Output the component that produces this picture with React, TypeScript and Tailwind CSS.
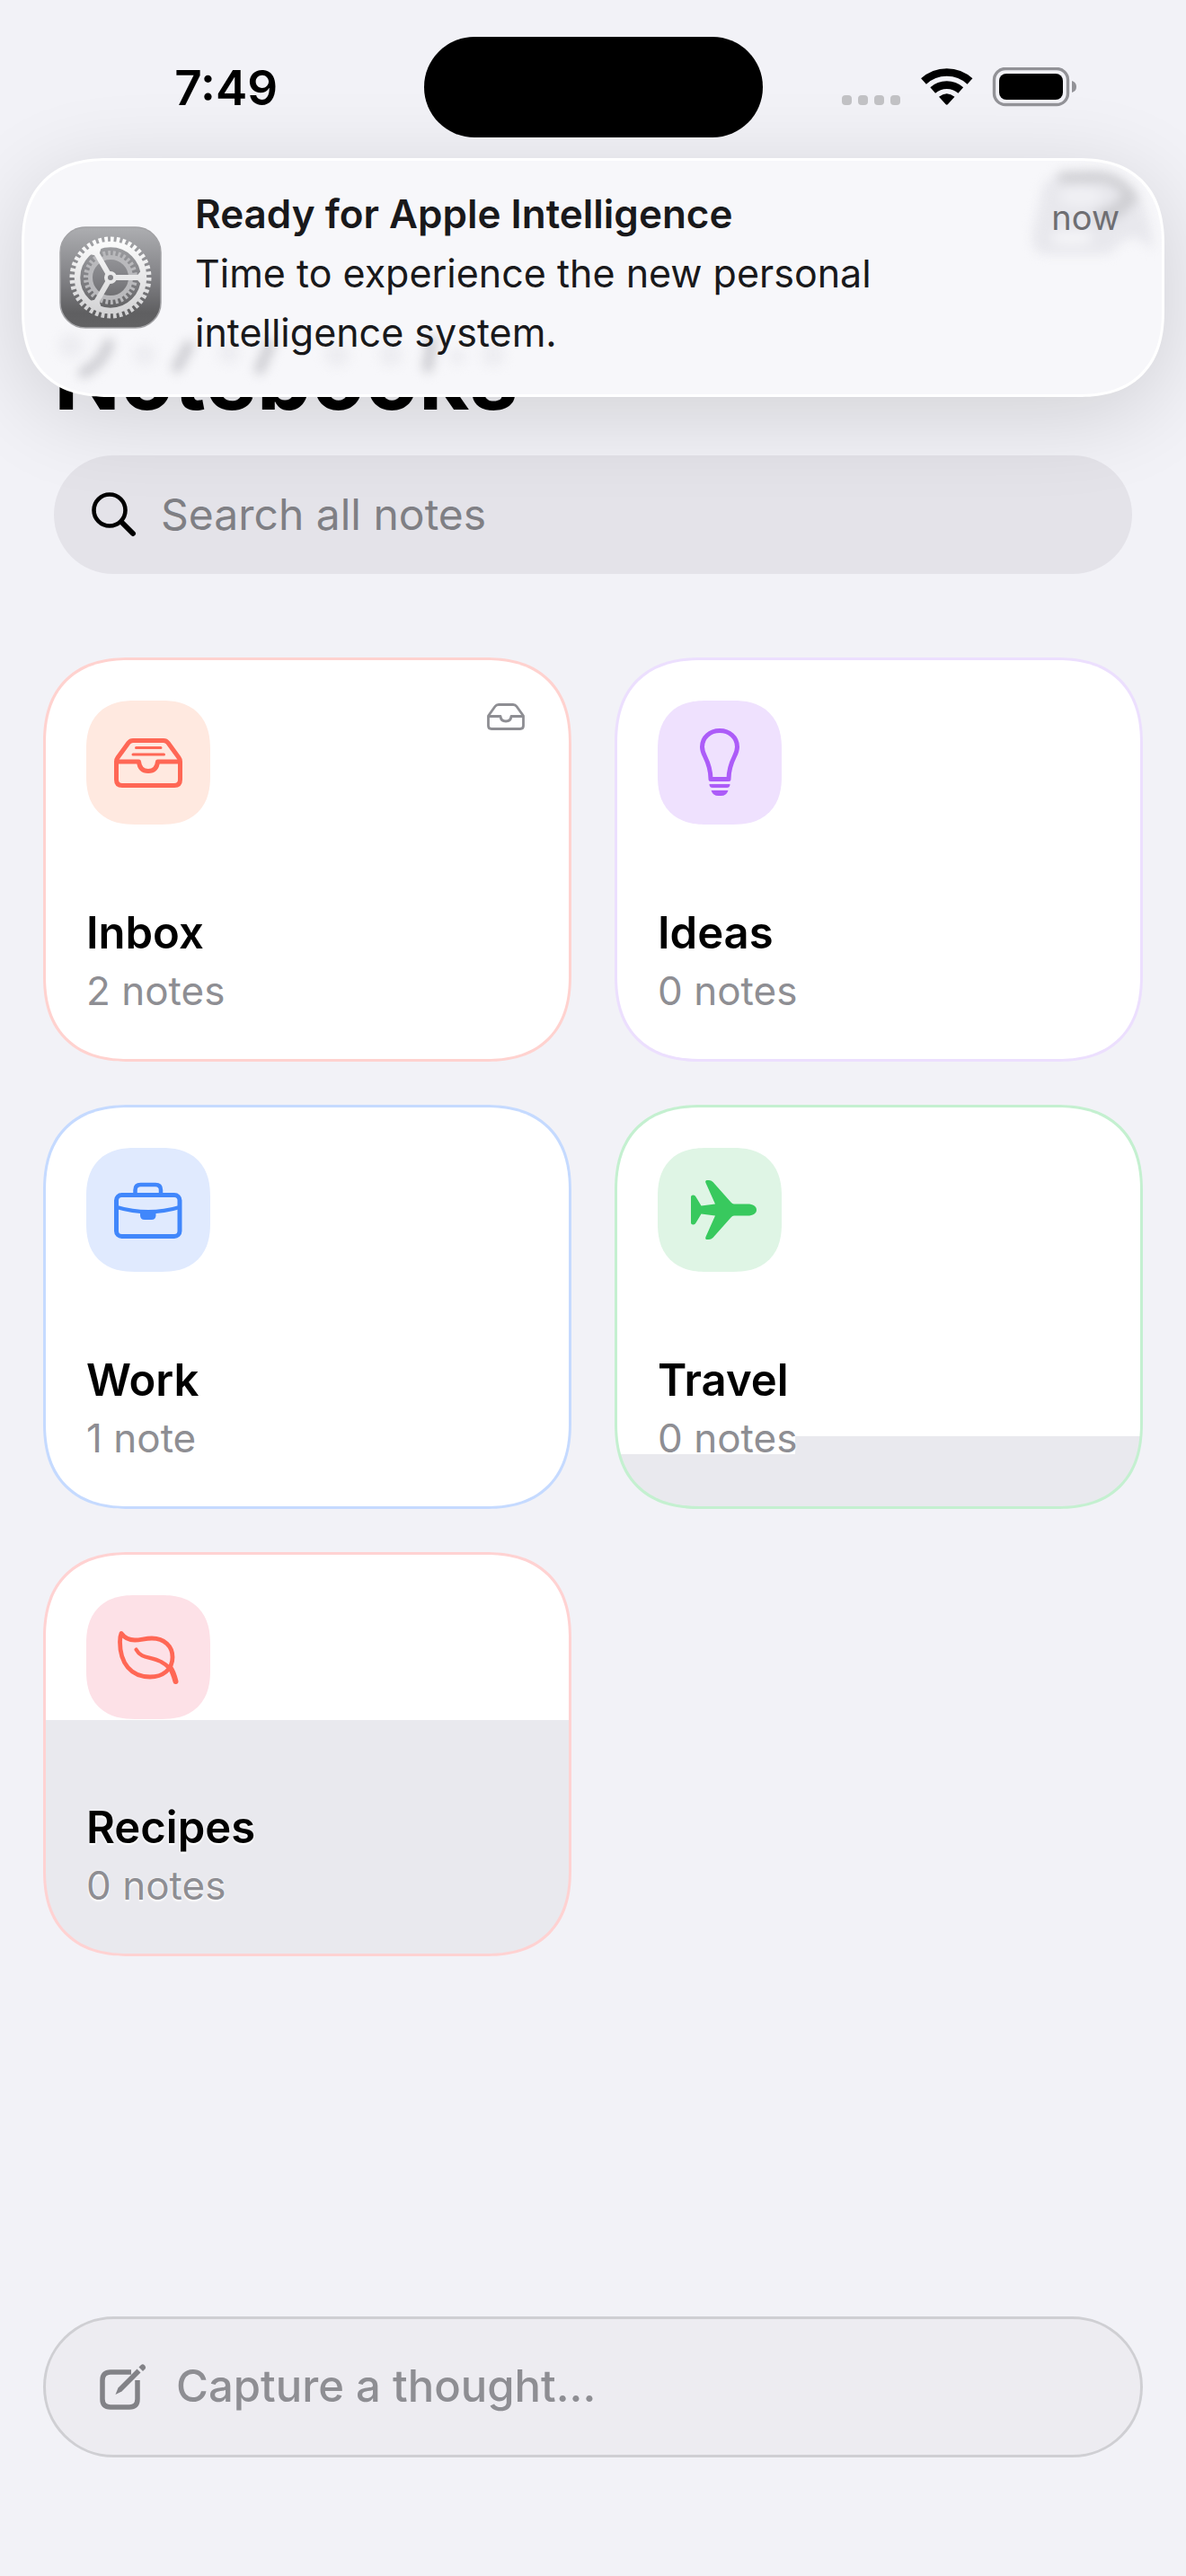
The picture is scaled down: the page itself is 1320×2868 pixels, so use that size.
import type { ReactNode } from "react";

type Notebook = {
  name: string;
  count: string;
  card: string;
  tile: string;
  icon: ReactNode;
  pinned?: boolean;
};

const NOTEBOOKS: Notebook[] = [
  {
    name: "Inbox",
    count: "2 notes",
    card: "border-[#ffd2cf] bg-white",
    tile: "bg-[#ffe9e0] text-[#ff6755]",
    icon: <TrayFull />,
    pinned: true,
  },
  {
    name: "Ideas",
    count: "0 notes",
    card: "border-[#ecdffe] bg-white",
    tile: "bg-[#efe1fe] text-[#ac5cf8]",
    icon: <Bulb />,
  },
  {
    name: "Work",
    count: "1 note",
    card: "border-[#c5daff] bg-white",
    tile: "bg-[#e0eafe] text-[#4187fb]",
    icon: <Briefcase />,
  },
  {
    name: "Travel",
    count: "0 notes",
    card: "border-[#c4f0d0] bg-white [background-image:linear-gradient(#fff,#fff),linear-gradient(to_bottom,#fff_366px,#e9e9ee_366px)] [background-size:198px_386px,100%_100%] bg-no-repeat",
    tile: "bg-[#dff5e5] text-[#38c95e]",
    icon: <Plane />,
  },
  {
    name: "Recipes",
    count: "0 notes",
    card: "border-[#ffd2d2] bg-[linear-gradient(to_bottom,#fff_184px,#e9e9ee_184px)]",
    tile: "bg-[#fde1e7] text-[#ff6755]",
    icon: <LeafIcon />,
  },
];

function TrayFull() {
  return (
    <svg viewBox="0 0 138 138" className="size-full" fill="none" stroke="currentColor" strokeWidth="5" strokeLinejoin="round" aria-hidden="true">
      <path d="M33.5 68 V88 Q33.5 94.5 40 94.5 H98 Q104.5 94.5 104.5 88 V68 Q104.5 65.5 103 63.5 L91 47 Q89 44.500 86 44.500 H52 Q49 44.5 47 47 L35 63.5 Q33.5 65.5 33.5 68 Z" />
      <path d="M34 68 H58.5 Q59.5 78.5 69 78.5 Q78.5 78.5 79.5 68 H104" />
      <path d="M55.5 52.5 H83 M52 60 H86.5" strokeWidth="3" strokeLinecap="round" />
    </svg>
  );
}

function Tray() {
  return (
    <svg viewBox="0 0 42 30" className="w-[42px] h-[30px] text-[#8e8e93]" fill="none" stroke="currentColor" strokeWidth="2.8" strokeLinejoin="round" aria-hidden="true">
      <path d="M1.5 14 V25 Q1.5 28.5 5 28.5 H37 Q40.5 28.5 40.5 25 V14 L33 3.5 Q31.5 1.5 29 1.5 H13 Q10.5 1.5 9 3.5 Z" />
      <path d="M1.5 14.5 H15 Q15.5 20 21 20 Q26.5 20 27 14.5 H40.5" />
    </svg>
  );
}

function Bulb() {
  return (
    <svg viewBox="0 0 138 138" className="size-full" fill="none" stroke="currentColor" strokeWidth="5" strokeLinejoin="round" aria-hidden="true">
      <path d="M59 87.5 C59 76 55.5 68 52.5 62 Q49.5 56 49.5 51.5 C49.5 41 58 33.5 69 33.5 C80 33.5 88.5 41 88.5 51.5 Q88.5 56 85.5 62 C82.5 68 79 76 79 87.5 Z" />
      <path d="M57.5 93 H80.5 Q80.5 97 77 97 H61 Q57.5 97 57.5 93 Z M59.5 100 H78.5 Q76.5 106 70.5 106 H67.5 Q61.5 106 59.5 100 Z" fill="currentColor" stroke="none" />
    </svg>
  );
}

function Briefcase() {
  return (
    <svg viewBox="0 0 138 138" className="size-full" fill="none" stroke="currentColor" strokeWidth="5" aria-hidden="true">
      <rect x="33.5" y="52.5" width="70.5" height="46" rx="6" />
      <path d="M54.5 52 V47 Q54.5 41 60.5 41 H77 Q83 41 83 47 V52" strokeWidth="4.5" />
      <path d="M34 66 Q69 76.5 104 66" strokeWidth="4.4" />
      <path d="M60 70 H77.5 V75 Q77.5 80 72.5 80 H65 Q60 80 60 75 Z" fill="currentColor" stroke="none" />
    </svg>
  );
}

function Plane() {
  return (
    <svg viewBox="0 0 138 138" className="size-full" fill="currentColor" aria-hidden="true">
      <path d="M110 69 C110 65 106 62.5 100 62.5 H85 Q83 62.5 81.5 60.5 L61.5 38 Q59.5 36 57 36 H54.5 Q52.5 36.5 53.5 39 L64 62.5 L48.5 64.5 L42.5 54.5 Q41.5 52.5 39.5 52.5 Q37 52.5 37 54.5 V83.5 Q37 85.5 39.5 85.5 Q41.5 85.5 42.5 83.5 L48.5 73.5 L64 75.5 L53.5 99 Q52.5 101.5 54.5 102 H57 Q59.5 102 61.5 100 L81.5 77.5 Q83 75.5 85 75.5 H100 C106 75.5 110 73 110 69 Z" />
    </svg>
  );
}

function LeafIcon() {
  return (
    <svg viewBox="0 0 138 138" className="size-full" fill="none" stroke="currentColor" strokeWidth="4.8" strokeLinecap="round" strokeLinejoin="round" aria-hidden="true">
      <path d="M39 42.5 C43 48 47 50 54 50 C61 50 65 48 73 48 C87 48 96 57 96 69 C96 83 85 91 71 91 C50 91 37.5 76 37.5 52 Q37.5 46 39 42.5 Z" />
      <path d="M55.5 60.5 C61 71 72 68 83 74 Q89 77 93 82" strokeWidth="4.2" />
      <path d="M93 80 Q97 86 99.5 96" strokeWidth="6" />
    </svg>
  );
}

function SettingsIcon() {
  return (
    <svg viewBox="0 0 114 114" className="size-[114px] shrink-0" fill="none" aria-hidden="true">
      <defs>
        <linearGradient id="tile" x1="0" y1="0" x2="0" y2="1">
          <stop offset="0" stopColor="#adaeb1" />
          <stop offset="0.5" stopColor="#828286" />
          <stop offset="0.85" stopColor="#5f5f61" />
          <stop offset="1" stopColor="#626264" />
        </linearGradient>
        <linearGradient id="gear" x1="0" y1="10" x2="0" y2="104" gradientUnits="userSpaceOnUse">
          <stop offset="0" stopColor="#ffffff" />
          <stop offset="1" stopColor="#cfcfd1" />
        </linearGradient>
      </defs>
      <rect x="1" y="1" width="112" height="112" rx="28" fill="url(#tile)" stroke="#a2a2a5" strokeWidth="1.5" />
      <g stroke="#b9b9bc">
        <circle cx="57" cy="57" r="27" strokeWidth="6" pathLength="60" strokeDasharray="1 1" />
        <circle cx="57" cy="57" r="22.5" strokeWidth="5" />
      </g>
      <g stroke="url(#gear)">
        <circle cx="57" cy="57" r="42.5" strokeWidth="6" pathLength="80" strokeDasharray="1.1 0.9" />
        <circle cx="57" cy="57" r="37" strokeWidth="6.5" />
        <path d="M62 57.01 L91 57 M54.5 61.3 L40 86.5 M54.5 52.7 L40 27.5" strokeWidth="6" />
        <path d="M86 57 L92 50 V64 Z M43 82 L46 91 L34 84 Z M43 32 L46 23 L34 30 Z" fill="url(#gear)" strokeWidth="2" strokeLinejoin="round" />
        <circle cx="57" cy="57" r="5" strokeWidth="4" />
      </g>
    </svg>
  );
}

function StatusBar() {
  return (
    <div className="relative z-20 grid grid-cols-[1fr_377px_1fr] items-start pt-[41px]">
      <div className="pt-[25px] pl-8 text-center text-[53px] leading-[64px] font-semibold">7:49</div>
      <div className="h-[112px] rounded-full bg-black" />
      <div className="flex justify-center pt-[34px] pr-8">
        <svg viewBox="0 0 262 44" className="h-[44px] w-[262px]" fill="none" aria-label="Wi-Fi connected, battery full" role="img">
          <g fill="#c1c1c4">
            <rect x="0" y="31" width="11" height="11" rx="4" />
            <rect x="18" y="31" width="11" height="11" rx="4" />
            <rect x="36" y="31" width="11" height="11" rx="4" />
            <rect x="54" y="31" width="11" height="11" rx="4" />
          </g>
          <g stroke="#000" strokeWidth="8.6">
            <path d="M91 15.5 A38 38 0 0 1 142.5 15.5" />
            <path d="M101.2 25.5 A23.5 23.5 0 0 1 132.3 25.5" />
          </g>
          <path d="M108 32.8 Q116.75 25.5 125.5 32.8 L118 41 Q116.75 42.5 115.5 41 Z" fill="#000" />
          <rect x="169.500" y="1.5" width="82" height="40" rx="12.5" stroke="#929297" strokeWidth="3.4" />
          <rect x="175" y="7" width="71" height="29" rx="8" fill="#000" />
          <path d="M256 15 Q261 16.5 261 21.5 Q261 26.5 256 28 Z" fill="#929297" />
        </svg>
      </div>
    </div>
  );
}

function Notification() {
  return (
    <section
      aria-label="Notification"
      className="absolute inset-x-6 top-[176px] z-10 flex min-h-[266px] items-start rounded-[78px] border-[3px] border-white bg-[#f7f7fa] pr-[47px] pl-[39px] shadow-[0_20px_100px_rgba(0,0,0,0.14)] supports-[corner-shape:squircle]:rounded-[96px] supports-[corner-shape:squircle]:[corner-shape:superellipse(1.25)]"
    >
      <div className="absolute inset-0 overflow-hidden rounded-[75px]" aria-hidden="true">
        {/* soft ghosts of the title and toolbar seen through the glass */}
        <svg className="absolute bottom-0 left-0 h-[80px] w-[560px] blur-[6px]" viewBox="0 0 560 80" fill="none" strokeLinecap="round">
          <g stroke="#cdcdd2" strokeWidth="12">
            <path d="M94 24 Q86 46 66 56" />
            <path d="M183 26 L170 50" />
            <path d="M274 24 L262 52" />
            <path d="M454 20 L449 50" />
          </g>
          <g fill="#ededf1">
            <circle cx="52" cy="26" r="14" />
            <circle cx="134" cy="36" r="12" />
            <circle cx="228" cy="34" r="12" />
            <circle cx="348" cy="36" r="14" />
            <circle cx="408" cy="36" r="13" />
            <circle cx="482" cy="38" r="9" />
            <circle cx="522" cy="36" r="13" />
          </g>
        </svg>
        <svg className="absolute top-0 right-0 h-[150px] w-[170px] blur-[6px]" viewBox="0 0 170 150" fill="none" strokeLinecap="round">
          <path d="M38 28 Q50 10 90 10 Q150 10 160 90 L158 100 Q140 70 112 104 H40 Q24 104 26 80 Z" fill="#e8e8ed" />
          <path d="M60 18 H104 Q126 22 138 42" stroke="#cfcfd3" strokeWidth="12" />
          <path d="M134 38 Q126 56 104 62" stroke="#cfcfd3" strokeWidth="16" />
          <ellipse cx="80" cy="40" rx="24" ry="10" fill="#f0f0f4" />
          <ellipse cx="70" cy="86" rx="24" ry="8" fill="#f4f4f7" />
        </svg>
      </div>
      <div className="relative pt-[73px]">
        <SettingsIcon />
      </div>
      <div className="relative flex-1 pt-[26px] pl-[37px] text-[#19191b]">
        <h2 className="text-[44px] leading-[66px] font-semibold">Ready for Apple Intelligence</h2>
        <p className="max-w-[800px] text-[43px] leading-[66px]">Time to experience the new personal intelligence system.</p>
      </div>
      <time className="relative pt-[30px] text-[38px] leading-[66px] text-[#6e6e72]">now</time>
    </section>
  );
}

function NotebookCard({ name, count, card, tile, icon, pinned }: Notebook) {
  return (
    <a
      href="#"
      className={`flex min-h-[450px] flex-col justify-between rounded-[76px] border-[3px] p-[45px] supports-[corner-shape:squircle]:rounded-[96px] supports-[corner-shape:squircle]:[corner-shape:superellipse(1.25)] ${card}`}
    >
      <div className="flex items-start justify-between">
        <div className={`size-[138px] rounded-[42px] supports-[corner-shape:squircle]:rounded-[54px] supports-[corner-shape:squircle]:[corner-shape:superellipse(1.25)] ${tile}`}>
          {icon}
        </div>
        {pinned && (
          <div className="pt-[3px] pr-[4px]">
            <Tray />
          </div>
        )}
      </div>
      <div className="[text-shadow:0_0_2px_#fff,0_2px_2px_#fff]">
        <h2 className="text-[49px] leading-[66px] font-semibold text-black">{name}</h2>
        <p className="text-[44px] leading-[62px] text-[#8e8e93]">{count}</p>
      </div>
    </a>
  );
}

export default function App() {
  return (
    <div className="relative flex min-h-screen flex-col overflow-hidden bg-[#f2f2f7] font-['Inter','Liberation_Sans',sans-serif] text-black">
      <StatusBar />
      <Notification />

      <main className="flex flex-1 flex-col">
        <h1 className="px-[60px] pt-[208px] text-[97px] leading-[120px] font-bold">Notebooks</h1>

        <label className="mx-[60px] mt-[26px] flex h-[132px] items-center gap-[27px] rounded-full bg-[#e4e3e9] px-[42px]">
          <svg viewBox="0 0 50 50" className="size-[50px] shrink-0" fill="none" stroke="#000" strokeLinecap="round" aria-hidden="true">
            <circle cx="20" cy="20" r="17.5" strokeWidth="4.6" />
            <path d="M33 33 L46 46" strokeWidth="6" />
          </svg>
          <input
            type="search"
            aria-label="Search all notes"
            placeholder="Search all notes"
            className="w-full bg-transparent text-[48px] leading-[64px] outline-none placeholder:text-[#7f7f84] placeholder:opacity-100"
          />
        </label>

        <div className="mt-[93px] grid grid-cols-2 gap-12 px-12">
          {NOTEBOOKS.map((n) => (
            <NotebookCard key={n.name} {...n} />
          ))}
        </div>

        <label className="mx-12 mt-auto mb-[132px] flex h-[157px] items-center gap-[33px] rounded-full border-[3px] border-[#cfcfd3] bg-[#edecf1] px-[60px]">
          <svg viewBox="0 0 52 52" className="size-[52px] shrink-0 text-[#828287]" fill="none" stroke="currentColor" aria-hidden="true">
            <path d="M35 9 H12 Q3 9 3 18 V39 Q3 48 12 48 H33 Q42 48 42 39 V18" strokeWidth="5.5" />
            <path d="M17.5 34 L20.5 26.5 L41.5 5.5 L45.5 9.500 L24.5 30.5 Z" fill="currentColor" stroke="none" />
            <path d="M43.5 3.5 L46 1 Q48 -0.5 50 1.5 Q52 3.5 50.5 5.5 L48 8 Z" fill="currentColor" stroke="none" />
          </svg>
          <input
            type="text"
            aria-label="Capture a thought"
            placeholder="Capture a thought..."
            className="w-full bg-transparent pb-[2px] text-[49px] leading-[64px] font-medium outline-none placeholder:text-[#8e8e93] placeholder:opacity-100"
          />
        </label>
      </main>
    </div>
  );
}
